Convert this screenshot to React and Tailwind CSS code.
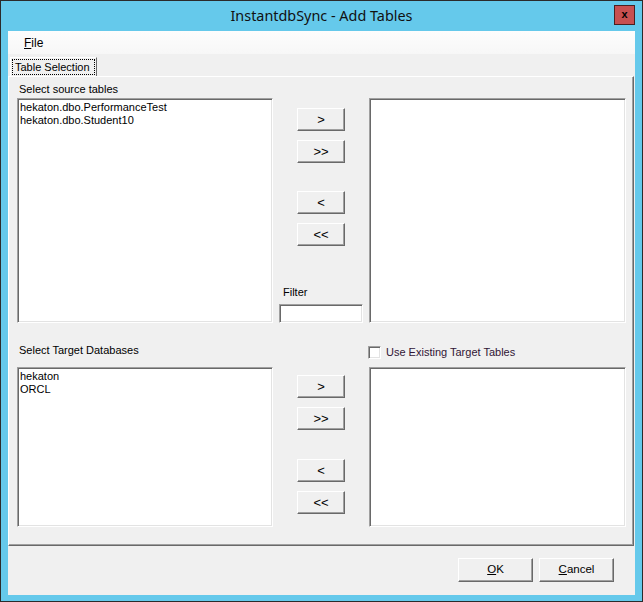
import React from 'react';

const sunken = 'border-t border-l border-t-[#a0a0a0] border-l-[#a0a0a0] border-r border-b border-r-white border-b-white shadow-[inset_1px_1px_0_#696969,inset_-1px_-1px_0_#e3e3e3] bg-white';
const raised = 'border-t border-l border-t-white border-l-white border-r border-b border-r-[#696969] border-b-[#696969] shadow-[inset_-1px_-1px_0_#a0a0a0] bg-[#f0f0f0]';

const Btn = ({ children, className = '' }) => (
  <button className={`${raised} w-[48px] h-[23px] flex items-center justify-center text-[13px] text-black leading-none pb-[1px] ${className}`}>
    {children}
  </button>
);

const ListBox = ({ items = [], className = '' }) => (
  <div className={`${sunken} ${className} pl-[2px] pt-[2px]`}>
    {items.map(item => (
      <div key={item} className="text-[11px] leading-[13px] text-black whitespace-nowrap">{item}</div>
    ))}
  </div>
);

const MoveButtons = ({ topGap, midGap }) => (
  <div className="flex flex-col pl-[24px]" style={{ paddingTop: topGap }}>
    <Btn>&gt;</Btn>
    <Btn className="mt-[9px]">&gt;&gt;</Btn>
    <Btn className={midGap}>&lt;</Btn>
    <Btn className="mt-[9px]">&lt;&lt;</Btn>
  </div>
);

export default function App() {
  return (
    <div className="w-[643px] h-[602px] bg-[#65c9eb] border border-[#2b2b2b] flex flex-col font-['Liberation_Sans',Arial,sans-serif] select-none">
      {/* title bar */}
      <div className="h-[30px] relative flex items-center justify-center">
        <span className="font-['Noto_Sans',sans-serif] text-[14.4px] text-[#111] pb-[1px]">InstantdbSync - Add Tables</span>
        <div className="absolute right-[7px] top-[4px] w-[21px] h-[20px] bg-[#c75050] border border-[#4a2020] flex items-center justify-center">
          <span className="text-[11px] font-bold text-black leading-none pb-[2px]">x</span>
        </div>
      </div>

      {/* client */}
      <div className="mx-[7px] mb-[6px] flex-1 bg-[#f0f0f0] flex flex-col">
        {/* menu */}
        <div className="h-[23px] bg-gradient-to-b from-[#fdfdfd] to-[#f7f7f7] flex items-center pl-[16px]">
          <span className="text-[12px] text-black"><u>F</u>ile</span>
        </div>

        {/* tab strip */}
        <div className="h-[22px] flex items-end pl-[2px] bg-[#f0f0f0]">
          <div className="h-[19px] w-[87px] border-t border-l border-white border-r border-r-[#696969] flex items-center pl-[1px] pr-[1px]">
            <div className="h-[16px] w-[83px] border border-dotted border-black flex items-center pl-[2px]">
              <span className="text-[11px] text-black">Table Selection</span>
            </div>
          </div>
        </div>

        {/* tab panel */}
        <div className="h-[470px] mr-[1px] border-t border-l border-white border-r border-b border-r-[#696969] border-b-[#696969] shadow-[inset_-1px_-1px_0_#a0a0a0] pl-[8px] flex flex-col">
          <div className="h-[21px] pt-[6px] pl-[2px] text-[11px] leading-[13px] text-black">Select source tables</div>

          <div className="flex">
            <ListBox className="w-[256px] h-[225px]" items={['hekaton.dbo.PerformanceTest', 'hekaton.dbo.Student10']} />
            <div className="w-[96px] h-[225px] flex flex-col">
              <MoveButtons topGap={10} midGap="mt-[28px]" />
              <div className="mt-auto flex flex-col">
                <span className="pl-[10px] text-[11px] leading-[13px] text-black">Filter</span>
                <input className={`${sunken} mt-[5px] ml-[6px] w-[84px] h-[19px] outline-none`} />
              </div>
            </div>
            <ListBox className="w-[257px] h-[225px]" />
          </div>

          <div className="h-[44px] flex items-end">
            <div className="w-[352px] pb-[10px] pl-[2px] text-[11px] leading-[13px] text-black">Select Target Databases</div>
            <div className="flex items-center pb-[8px] -ml-[1px]">
              <div className={`${sunken} w-[13px] h-[13px]`} />
              <span className="ml-[5px] text-[11px] leading-[13px] text-[#301535]">Use Existing Target Tables</span>
            </div>
          </div>

          <div className="flex">
            <ListBox className="w-[256px] h-[160px]" items={['hekaton', 'ORCL']} />
            <div className="w-[96px] h-[160px]">
              <MoveButtons topGap={8} midGap="mt-[29px]" />
            </div>
            <ListBox className="w-[257px] h-[160px]" />
          </div>
        </div>

        {/* footer */}
        <div className="flex-1 flex justify-end items-start pt-[12px] pr-[21px] gap-[6px]">
          <button className={`${raised} w-[75px] h-[24px] text-[11.5px] text-black flex items-center justify-center`}>
            <span><u>O</u>K</span>
          </button>
          <button className={`${raised} w-[75px] h-[24px] text-[11.5px] text-black flex items-center justify-center`}>
            <span><u>C</u>ancel</span>
          </button>
        </div>
      </div>
    </div>
  );
}
